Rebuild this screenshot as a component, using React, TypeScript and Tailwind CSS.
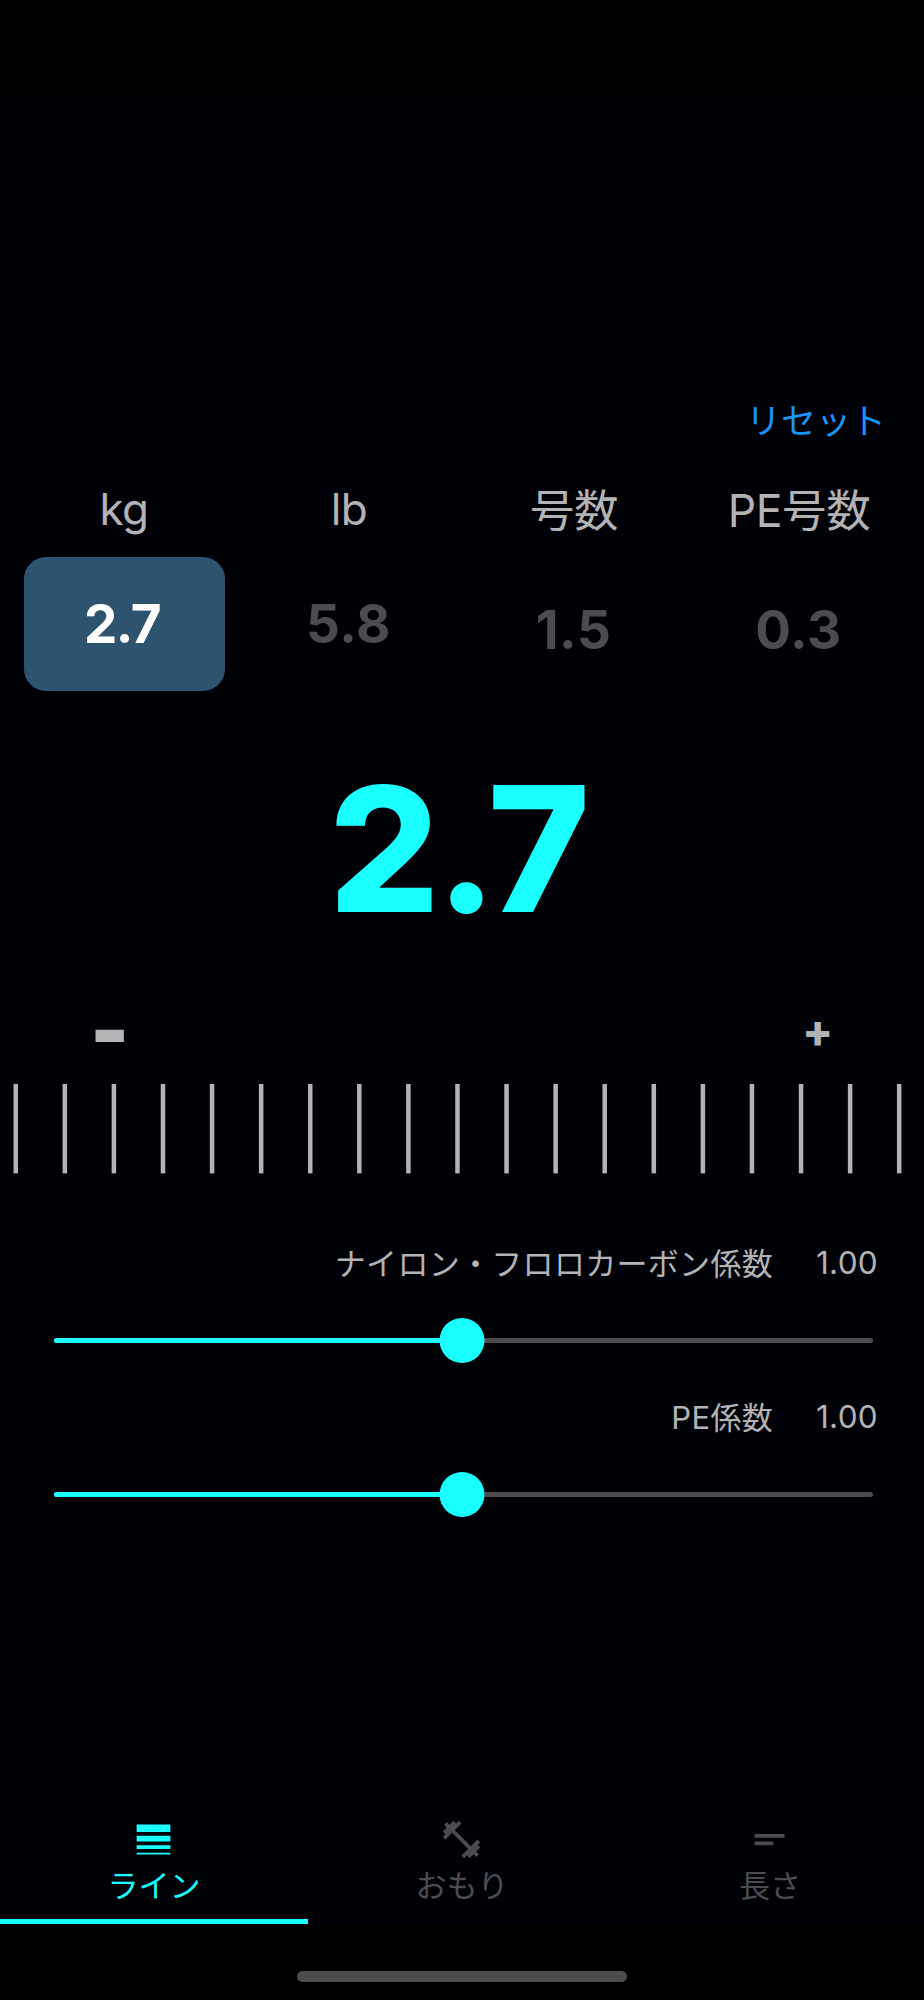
import React, { useState } from "react";
import { MdFitnessCenter, MdLineWeight, MdShortText } from "react-icons/md";

const units = [
  { id: "kg", label: "kg", value: "2.7", cjk: false },
  { id: "lb", label: "lb", value: "5.8", cjk: false },
  { id: "go", label: "号数", value: "1.5", cjk: true },
  { id: "pe", label: "PE号数", value: "0.3", cjk: true },
];

const tabs = [
  { id: "line", label: "ライン", Icon: MdLineWeight },
  { id: "weight", label: "おもり", Icon: MdFitnessCenter },
  { id: "length", label: "長さ", Icon: MdShortText },
];

const ticks = Array.from({ length: 19 });

interface UnitCellProps {
  label: string;
  value: string;
  cjk: boolean;
  active: boolean;
  onSelect: () => void;
}

const UnitCell: React.FC<UnitCellProps> = ({ label, value, cjk, active, onSelect }) => (
  <div className="flex w-[225px] flex-col items-center">
    <div
      className={`h-[68px] whitespace-nowrap leading-[64px] text-[#b3b3b5] ${
        cjk ? "pr-px pt-[2px] text-[44.5px] tracking-[-0.4px]" : "pr-px text-[44px] tracking-[-0.5px]"
      }`}
    >
      {label}
    </div>
    <button
      onClick={onSelect}
      className={`flex h-[134px] w-[201px] items-center justify-center rounded-[22px] pt-[2px] text-[53px] font-bold ${
        cjk ? "mt-[25px]" : "mt-[12px]"
      } ${
        active ? "bg-[#2e536e] pr-[5px] tracking-[-1.5px] text-white" : "pr-[2px] tracking-[0.5px] text-[#4c4c50]"
      }`}
    >
      {value}
    </button>
  </div>
);

interface CoefficientProps {
  label: string;
  value: number;
}

// Range is 0..2, so 1.00 sits in the middle of the track
const Coefficient: React.FC<CoefficientProps> = ({ label, value }) => {
  const percent = (value / 2) * 100;
  return (
    <div className="h-[154px]">
      <div className="flex h-[50px] items-center justify-end pr-[46px] text-[31px] text-[#b3b3b5]">
        <span className="tracking-[0.3px]">{label}</span>
        <span className="w-[105px] pb-[2px] text-right text-[31.5px] tracking-[0.3px]">
          {value.toFixed(2)}
        </span>
      </div>
      <div className="relative ml-[53.5px] mr-[51.5px] mt-[29px] flex h-[45px] items-center">
        <div className="h-[5px] w-full overflow-hidden rounded-full bg-[#4c4c50]">
          <div className="h-full bg-[#19ffff]" style={{ width: `${percent}%` }} />
        </div>
        <div
          className="absolute size-[45px] -translate-x-1/2 rounded-full bg-[#19ffff]"
          style={{ left: `${percent - 0.1}%` }}
        />
      </div>
    </div>
  );
};

export default function App() {
  const [unit, setUnit] = useState("kg");
  const [tab, setTab] = useState("line");
  const current = units.find((u) => u.id === unit);

  return (
    <div className="flex h-[2000px] w-[924px] flex-col overflow-hidden bg-black font-['Inter','Noto_Sans_CJK_JP',sans-serif]">
      <div className="h-[98px] shrink-0" />

      <main className="flex h-[1826px] shrink-0 flex-col bg-[#000106]">
        <div className="mt-[298px] flex h-[50px] items-center justify-end pr-[38px]">
          <button className="text-[35px] leading-none text-[#1c94f7]">リセット</button>
        </div>

        {/* Units */}
        <div className="mt-[31px] flex h-[214px] px-[12px]">
          {units.map((u) => (
            <UnitCell
              key={u.id}
              label={u.label}
              value={u.value}
              cjk={u.cjk}
              active={u.id === unit}
              onSelect={() => setUnit(u.id)}
            />
          ))}
        </div>

        <div className="mt-[58px] flex h-[200px] items-center justify-center pr-[9px] text-[174px] font-extrabold leading-none tracking-[-4px] text-[#19ffff]">
          {current?.value}
        </div>

        {/* Dial */}
        <div className="mt-[44px] flex h-[75px] items-center justify-between pl-[90px] pr-[91px] text-[#b3b3b5]">
          <span className="text-[83px] font-black leading-none">-</span>
          <span className="text-[45px] font-extrabold leading-none">+</span>
        </div>
        <svg className="mt-[16px] h-[90px] w-[924px] fill-[#b3b3b5]" viewBox="0 0 924 90">
          {ticks.map((_, i) => (
            <rect key={i} x={13.5 + i * 49.08} y={0} width={4.5} height={89.4} />
          ))}
        </svg>

        {/* Coefficients */}
        <div className="mt-[65px]">
          <Coefficient label="ナイロン・フロロカーボン係数" value={1} />
          <Coefficient label="PE係数" value={1} />
        </div>

        {/* Tabs */}
        <nav className="mt-auto flex h-[124px]">
          {tabs.map(({ id, label, Icon }) => (
            <button
              key={id}
              onClick={() => setTab(id)}
              className={`flex w-[308px] flex-col items-center border-b-[5px] pt-[17px] ${
                id === tab ? "border-[#19ffff] text-[#19ffff]" : "border-transparent text-[#4c4c50]"
              }`}
            >
              <Icon className="mr-px size-[45px]" />
              <span className="text-[31px] leading-[48px]">{label}</span>
            </button>
          ))}
        </nav>
      </main>

      <div className="flex grow justify-center pt-[47px]">
        <div className="h-[11px] w-[330px] rounded-full bg-[#4d4d4d]" />
      </div>
    </div>
  );
}
